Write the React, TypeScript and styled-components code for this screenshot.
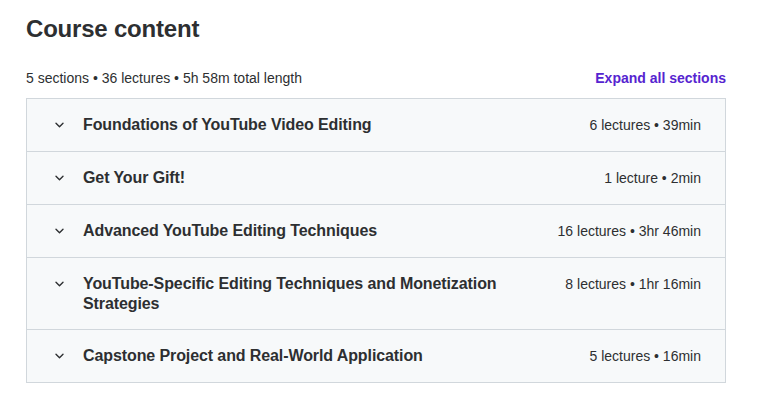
import React from "react";
import styled, { createGlobalStyle } from "styled-components";

const GlobalStyle = createGlobalStyle`
  html, body { margin: 0; padding: 0; background: #ffffff; }
  body { font-family: "Liberation Sans", Arial, sans-serif; color: #2d2f31; }
`;

const Page = styled.div`
  width: 700px;
  padding: 14px 0 0 26px;
`;

const Title = styled.h2`
  margin: 0;
  font-size: 24px;
  font-weight: 700;
  line-height: 30px;
  color: #2d2f31;
  letter-spacing: -0.2px;
`;

const Header = styled.div`
  display: flex;
  justify-content: space-between;
  align-items: center;
  margin-top: 24px;
  margin-bottom: 10px;
  font-size: 14px;
  line-height: 20px;
`;

const Summary = styled.span`
  color: #2d2f31;
`;

const ExpandButton = styled.button`
  background: none;
  border: none;
  padding: 0;
  font-family: inherit;
  font-size: 14px;
  font-weight: 700;
  color: #5624d0;
  cursor: pointer;
`;

const Accordion = styled.div`
  border: 1px solid #d1d7dc;
  border-bottom: none;
`;

const Row = styled.div`
  display: flex;
  align-items: flex-start;
  padding: 16px 24px;
  background: #f7f9fa;
  border-bottom: 1px solid #d1d7dc;
`;

const Chevron = styled.span`
  width: 16px;
  height: 20px;
  display: flex;
  align-items: center;
  justify-content: center;
  margin-right: 16px;
  flex-shrink: 0;
`;

const SectionTitle = styled.span`
  flex: 1;
  font-size: 16px;
  font-weight: 700;
  line-height: 19.5px;
  color: #2d2f31;
  letter-spacing: -0.1px;
`;

const Meta = styled.span`
  margin-left: 48px;
  font-size: 14px;
  line-height: 20px;
  white-space: nowrap;
  color: #2d2f31;
`;

const sections = [
  { title: "Foundations of YouTube Video Editing", meta: "6 lectures • 39min" },
  { title: "Get Your Gift!", meta: "1 lecture • 2min" },
  { title: "Advanced YouTube Editing Techniques", meta: "16 lectures • 3hr 46min" },
  {
    title: "YouTube-Specific Editing Techniques and Monetization Strategies",
    meta: "8 lectures • 1hr 16min",
  },
  { title: "Capstone Project and Real-World Application", meta: "5 lectures • 16min" },
];

const ChevronIcon = () => (
  <svg width="9" height="6" viewBox="0 0 9 6" fill="none">
    <path d="M1 1.2l3.5 3.5 3.5-3.5" stroke="#2d2f31" strokeWidth="1.4" strokeLinecap="round" strokeLinejoin="round" />
  </svg>
);

export default function App() {
  return (
    <>
      <GlobalStyle />
      <Page>
        <Title>Course content</Title>
        <Header>
          <Summary>5 sections • 36 lectures • 5h 58m total length</Summary>
          <ExpandButton>Expand all sections</ExpandButton>
        </Header>
        <Accordion>
          {sections.map((s) => (
            <Row key={s.title}>
              <Chevron>
                <ChevronIcon />
              </Chevron>
              <SectionTitle>{s.title}</SectionTitle>
              <Meta>{s.meta}</Meta>
            </Row>
          ))}
        </Accordion>
      </Page>
    </>
  );
}
